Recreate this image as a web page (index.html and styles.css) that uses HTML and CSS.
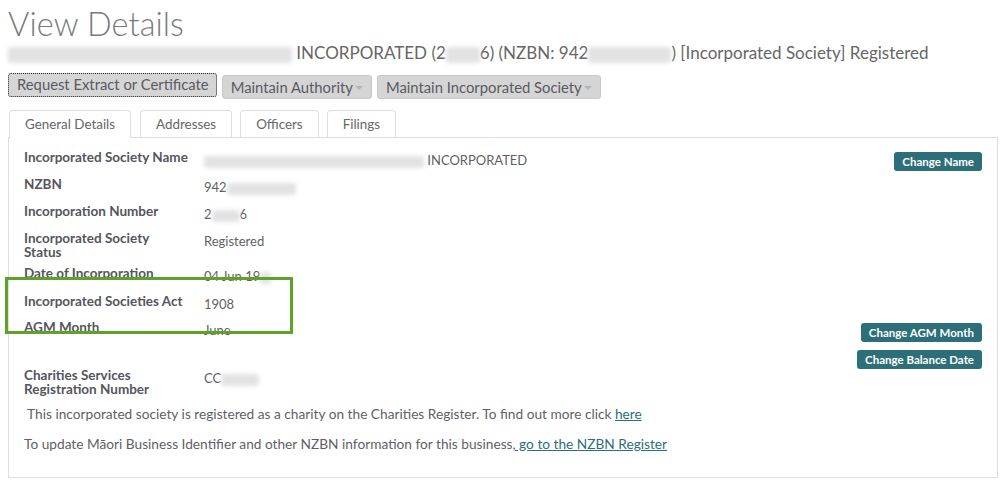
FILE: index.html
```html
<!DOCTYPE html>
<html lang="en">
<head>
<meta charset="utf-8">
<title>View Details</title>
<link rel="stylesheet" href="styles.css">
</head>
<body>
<div class="page">
  <h1 class="title">View Details</h1>
  <div class="subtitle"><span class="redact r-name"></span> INCORPORATED (2<span class="redact r-num"></span>6) (NZBN: 942<span class="redact r-nzbn"></span>) [Incorporated Society] Registered</div>

  <div class="actions">
    <button class="btn btn-focus">Request Extract or Certificate</button>
    <button class="btn">Maintain Authority<span class="caret"></span></button>
    <button class="btn">Maintain Incorporated Society<span class="caret"></span></button>
  </div>

  <div class="tabs">
    <div class="tab active">General Details</div>
    <div class="tab">Addresses</div>
    <div class="tab">Officers</div>
    <div class="tab">Filings</div>
  </div>

  <div class="panel">
    <div class="row h27">
      <div class="label">Incorporated Society Name</div>
      <div class="value"><span class="redact r-vname"></span> INCORPORATED</div>
      <button class="action">Change Name</button>
    </div>
    <div class="row h27">
      <div class="label">NZBN</div>
      <div class="value">942<span class="redact r-vnzbn"></span></div>
    </div>
    <div class="row h27">
      <div class="label">Incorporation Number</div>
      <div class="value">2<span class="redact r-vnum"></span>6</div>
    </div>
    <div class="row h35">
      <div class="label">Incorporated Society<br>Status</div>
      <div class="value">Registered</div>
    </div>
    <div class="row h28">
      <div class="label">Date of Incorporation</div>
      <div class="value">04 Jun 19<span class="redact r-year"></span></div>
    </div>
    <div class="row h26">
      <div class="label">Incorporated Societies Act</div>
      <div class="value">1908</div>
    </div>
    <div class="row h30">
      <div class="label">AGM Month</div>
      <div class="value">June</div>
      <button class="action a-agm">Change AGM Month</button>
    </div>
    <div class="row h18">
      <div class="label"></div>
      <div class="value"></div>
      <button class="action a-bal">Change Balance Date</button>
    </div>
    <div class="row h38">
      <div class="label">Charities Services<br>Registration Number</div>
      <div class="value">CC<span class="redact r-cc"></span></div>
    </div>
    <p class="note note-charity">&nbsp;This incorporated society is registered as a charity on the Charities Register. To find out more click <a href="#">here</a></p>
    <p class="note">To update Māori Business Identifier and other NZBN information for this business<a href="#">, go to the NZBN Register</a></p>

    <div class="highlight"></div>
  </div>
</div>
</body>
</html>
```

FILE: styles.css
```css
* { box-sizing: border-box; }
html, body { margin: 0; padding: 0; background: #fff; }
body {
  font-family: Lato, "Liberation Sans", sans-serif;
  color: #5f5f66;
}
.page { padding: 0 8px 0 8px; width: 1006px; }

.title {
  margin: 0;
  padding-top: 4px;
  font-size: 32.5px;
  line-height: 39px;
  font-weight: 300;
  color: #7a7a7a;
  letter-spacing: 0.1px;
}
.subtitle {
  font-size: 17px;
  line-height: 22px;
  color: #666;
  margin-top: -1px;
  white-space: nowrap;
}

.redact {
  display: inline-block;
  vertical-align: middle;
  height: 16px;
  background: #e2e2e2;
  filter: blur(2px);
  border-radius: 3px;
}
.r-name { width: 284px; }
.r-num { width: 34px; }
.r-nzbn { width: 83px; }
.r-vname { width: 220px; height: 12px; }
.r-vnzbn { width: 69px; height: 12px; }
.r-vnum { width: 28px; height: 12px; }
.r-year { width: 11px; height: 12px; }
.r-cc { width: 38px; height: 12px; }

.actions {
  display: flex;
  align-items: flex-start;
  gap: 5px;
  margin-top: 9px;
  height: 26px;
}
.btn {
  font-family: inherit;
  font-size: 14.8px;
  color: #5a5a62;
  background: #d5d5d5;
  border: 1px solid #c8c8c8;
  border-radius: 3px;
  height: 24px;
  padding: 0 8px;
  margin-top: 2px;
  display: flex;
  align-items: center;
  cursor: pointer;
}
.btn-focus {
  margin-top: 0;
  outline: 1px dotted #333;
  outline-offset: -1px;
  padding: 0 7px 2px 8px;
}
.caret {
  display: inline-block;
  width: 0; height: 0;
  border-left: 4px solid transparent;
  border-right: 4px solid transparent;
  border-top: 4px solid #b5b5b5;
  margin-left: 2px;
  margin-top: 1px;
}

.tabs {
  display: flex;
  gap: 8px;
  margin-top: 11px;
  padding-left: 1px;
  height: 27px;
  position: relative;
  z-index: 1;
}
.tab {
  font-size: 13.4px;
  color: #666;
  border: 1px solid #ddd;
  border-bottom: none;
  border-radius: 4px 4px 0 0;
  background: #fff;
  padding: 0 15px;
  line-height: 27px;
  height: 27px;
}
.tab.active { height: 28px; margin-right: 1px; }

.panel {
  position: relative;
  border: 1px solid #ddd;
  height: 341px;
  padding: 12px 15px 0 15px;
}
.row {
  display: flex;
  align-items: flex-start;
}
.h27 { height: 27px; }
.h35 { height: 35px; }
.h28 { height: 28px; }
.h26 { height: 26px; }
.h30 { height: 30px; }
.h18 { height: 18px; }
.h38 { height: 38px; }

.label {
  width: 180px;
  font-size: 13.5px;
  font-weight: 700;
  line-height: 14px;
  color: #55555e;
}
.value {
  flex: 1;
  font-size: 13px;
  line-height: 14px;
  padding-top: 3px;
  color: #5f5f66;
}
.action {
  font-family: inherit;
  font-size: 11.5px;
  font-weight: 700;
  color: #fff;
  background: #2d6f78;
  border: none;
  border-radius: 3px;
  height: 19px;
  padding: 0 8px;
  margin-top: 2px;
  cursor: pointer;
}
.a-agm { margin-top: 3px; }
.a-bal { margin-top: 0; }

.note {
  margin: 0;
  font-size: 13.7px;
  line-height: 16px;
  color: #5f5f66;
}
.note-charity { margin-top: 0; margin-bottom: 14px; }
.note a { color: #2a6f7a; text-decoration: underline; }

.highlight {
  position: absolute;
  left: -4px;
  top: 139px;
  width: 288px;
  height: 57px;
  border: 3px solid #5ea22a;
}
```
